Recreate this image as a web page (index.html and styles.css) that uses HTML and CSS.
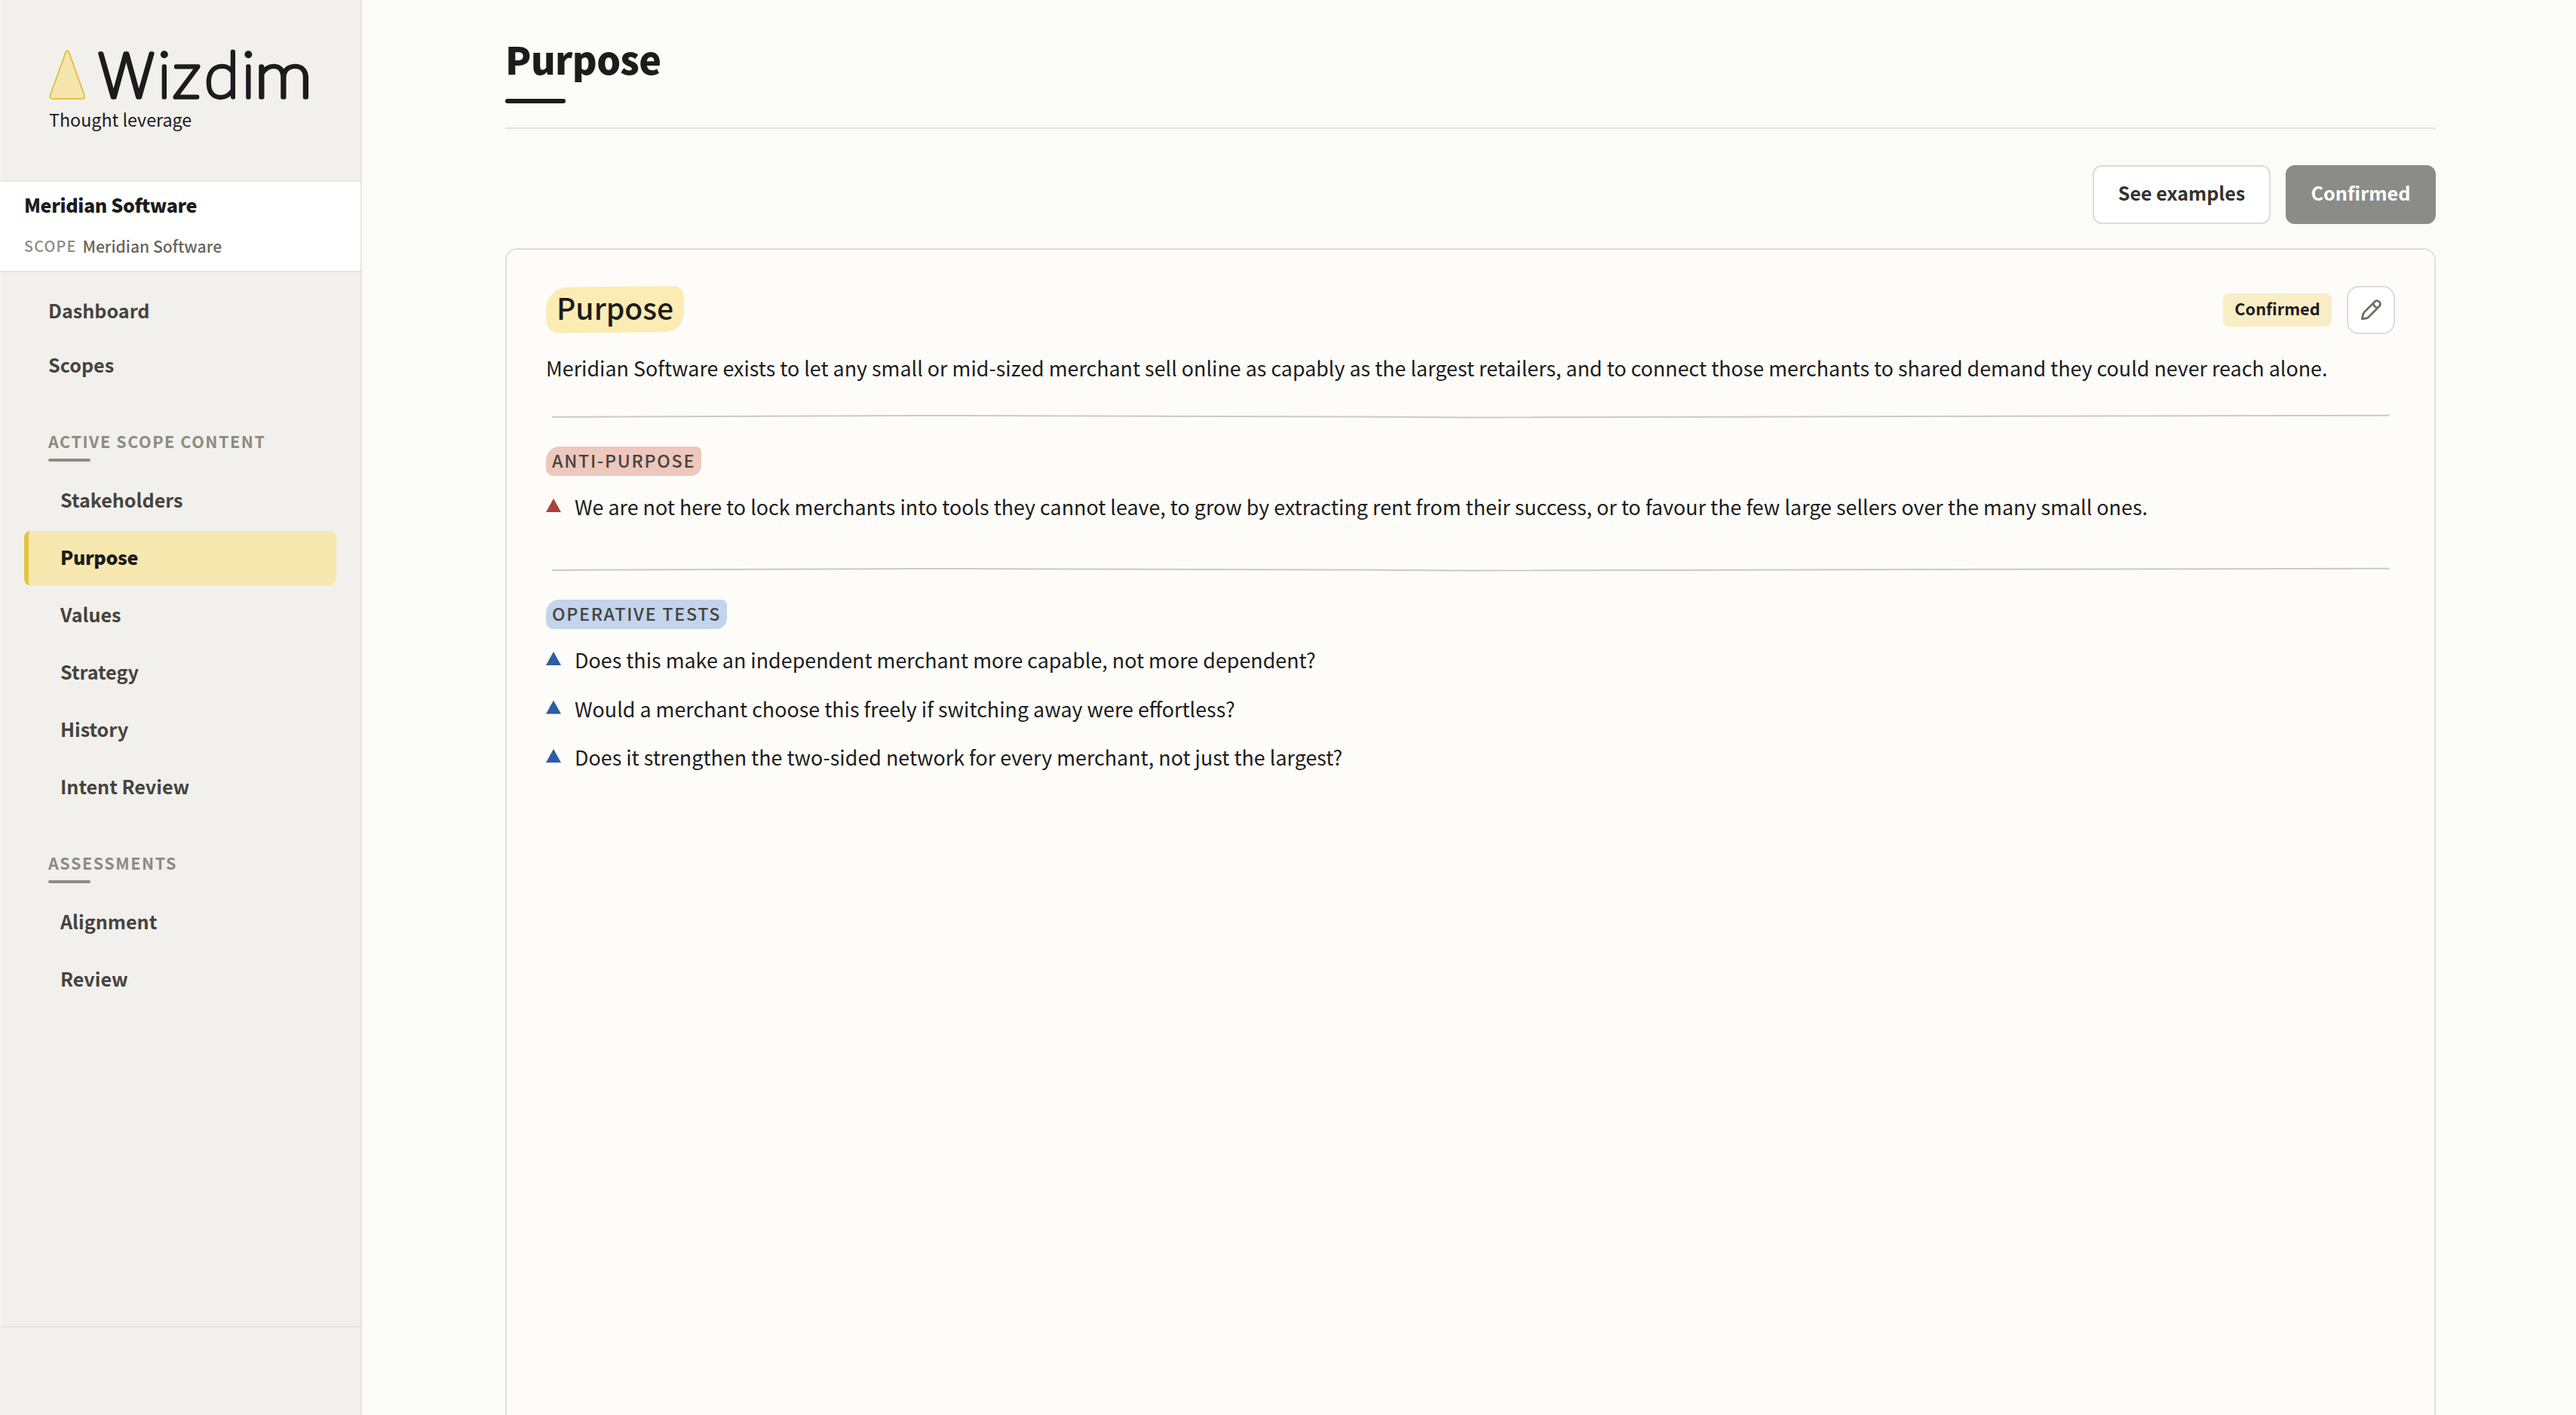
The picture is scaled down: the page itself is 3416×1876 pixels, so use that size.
FILE: index.html
```html
<!DOCTYPE html>
<html lang="en">
<head>
<meta charset="utf-8">
<title>Purpose – Wizdim</title>
<link rel="stylesheet" href="styles.css">
</head>
<body>
<div class="app">
  <aside class="sidebar">
    <header class="brand">
      <svg class="logo" viewBox="64 30 380 125" width="380" height="125" role="img" aria-label="Wizdim">
        <path d="M87.3 69 Q89.3 65.500 91.300 69 L111.700 126 Q113.500 131 108.500 131 H70 Q65 131 66.800 126 Z" fill="#f6e6ad" stroke="#e0c340" stroke-width="2"/>
        <text class="wordmark" y="129.300" x="130.200 209 229 271 320.600"><tspan class="wordmark-cap">W</tspan>izdi</text><text class="wordmark" transform="translate(337.200 129.300) scale(1.150 1)">m</text>
      </svg>
      <p class="tagline">Thought leverage</p>
    </header>
    <section class="company">
      <h2 class="company-name">Meridian Software</h2>
      <p class="company-scope"><span class="scope-label">SCOPE</span><span>Meridian Software</span></p>
    </section>
    <nav class="nav">
      <a class="link">Dashboard</a>
      <a class="link">Scopes</a>
      <h3 class="group">ACTIVE SCOPE CONTENT</h3>
      <div class="sublinks">
        <a class="link sub">Stakeholders</a>
        <a class="link sub active">Purpose</a>
        <a class="link sub">Values</a>
        <a class="link sub">Strategy</a>
        <a class="link sub">History</a>
        <a class="link sub">Intent Review</a>
      </div>
      <h3 class="group">ASSESSMENTS</h3>
      <div class="sublinks">
        <a class="link sub">Alignment</a>
        <a class="link sub">Review</a>
      </div>
    </nav>
    <footer class="sidebar-foot"></footer>
  </aside>

  <main class="main">
    <header class="page-head">
      <h1 class="title">Purpose</h1>
    </header>
    <div class="actions">
      <button class="btn">See examples</button>
      <button class="btn btn-done">Confirmed</button>
    </div>
    <article class="card">
      <div class="card-head">
        <h2 class="marker"><span>Purpose</span></h2>
        <div class="card-tools">
          <span class="badge">Confirmed</span>
          <button class="edit" aria-label="Edit">
            <svg viewBox="2 2 60 60" width="60" height="60" fill="none" stroke="#716d64" stroke-width="2.800" stroke-linejoin="round" stroke-linecap="round">
              <path d="M37.600 20.400 L23.500 34.600 Q22 36.200 21.500 38.300 L20.300 43.900 L25.800 43 Q27.600 42.600 29 41.200 L43.500 26.700 A4.400 4.400 0 0 0 37.600 20.400 Z M35 23.200 Q36 28 40.700 29"/>
            </svg>
          </button>
        </div>
      </div>
      <p class="statement">Meridian Software exists to let any small or mid-sized merchant sell online as capably as the largest retailers, and to connect those merchants to shared demand they could never reach alone.</p>
      <svg class="rule" viewBox="0 0 2452 24" width="2452" height="24"><path d="M8 12 C376 9.200 700 9.300 1076 11.600 S1776 14.500 2445 9.700"/></svg>
      <h3 class="tag tag-red">ANTI-PURPOSE</h3>
      <ul class="list list-red">
        <li>We are not here to lock merchants into tools they cannot leave, to grow by extracting rent from their success, or to favour the few large sellers over the many small ones.</li>
      </ul>
      <svg class="rule rule-gap" viewBox="0 0 2452 24" width="2452" height="24"><path d="M8 12 C376 9.200 700 9.300 1076 11.600 S1776 14.500 2445 9.700"/></svg>
      <h3 class="tag tag-blue">OPERATIVE TESTS</h3>
      <ul class="list list-blue">
        <li>Does this make an independent merchant more capable, not more dependent?</li>
        <li>Would a merchant choose this freely if switching away were effortless?</li>
        <li>Does it strengthen the two-sided network for every merchant, not just the largest?</li>
      </ul>
    </article>
  </main>
</div>
</body>
</html>
```
FILE: styles.css
```css
* { box-sizing: border-box; margin: 0; padding: 0; }

body {
  font-family: "Noto Sans CJK SC", "Noto Sans", sans-serif;
  color: #1c1c1c;
  background: #fbfbf7;
  overflow: hidden;
}

.app { display: flex; height: 1876px; overflow: hidden; }

/* Sidebar */
.sidebar {
  display: flex;
  flex-direction: column;
  flex: none;
  width: 480px;
  background: #f2f0ec;
  border-right: 2px solid #e5e4df;
}
.brand {
  height: 241px;
  padding: 30px 0 0 64px;
  border-bottom: 2px solid #e5e4df;
  box-shadow: inset 2px 0 #f4f3ef;
}
.logo { display: block; overflow: visible; }
.wordmark {
  font-family: Lato, sans-serif;
  font-weight: 100;
  font-size: 85px;
  fill: #1c1c1c;
  stroke: #1c1c1c;
  stroke-width: 5.300px;
  stroke-linejoin: round;
}
.wordmark-cap { font-family: Inter, sans-serif; font-size: 80px; }
.tagline { margin: -13px 0 0 1px; font-size: 23.280px; line-height: 32px; }

.company {
  height: 120px;
  padding: 10px 32px 0;
  background: #fff;
  border-bottom: 2px solid #e5e4df;
}
.company-name {
  font-size: 25.070px;
  font-weight: 900;
  line-height: 40px;
  letter-spacing: -0.360px;
}
.company-scope {
  display: flex;
  gap: 8px;
  margin-top: 15px;
  font-size: 21.100px;
  font-weight: 500;
  line-height: 40px;
  color: #67655d;
}
.scope-label { font-size: 19.700px; letter-spacing: 1.200px; color: #8d8b82; }

.nav { flex: 1; padding: 16px 32px 0; box-shadow: inset 2px 0 #f4f3ef; }
.link {
  display: block;
  height: 72px;
  padding-left: 32px;
  border-radius: 8px;
  font-size: 25.130px;
  font-weight: 700;
  line-height: 68px;
  color: #45443e;
}
.sublinks { display: grid; gap: 4px; margin-top: 16px; }
.sub { padding-left: 42px; border-left: 6px solid transparent; }
.active {
  background: #f7e8af;
  border-left-color: #e2c642;
  color: #1c1c1c;
  font-size: 25.070px;
  font-weight: 900;
  letter-spacing: -0.300px;
}
.group {
  margin: 47px 0 0 32px;
  font-size: 21.490px;
  font-weight: 700;
  line-height: 34px;
  letter-spacing: 1.580px;
  color: #8d8b82;
  white-space: nowrap;
}
.group::after {
  content: "";
  display: block;
  width: 56px;
  height: 4px;
  margin-top: 6px;
  border-radius: 2px;
  background: #8d8b82;
}
.sidebar-foot { height: 118px; border-top: 2px solid #e5e4df; }

/* Main column */
.main { flex: 1; padding: 41px 186px 0 190px; }
.page-head { height: 130px; border-bottom: 2px solid #e4e3de; }
.title {
  font-size: 50.150px;
  font-weight: 900;
  line-height: 72px;
  letter-spacing: -0.560px;
}
.title::after {
  content: "";
  display: block;
  width: 80px;
  height: 6px;
  margin-top: 18px;
  border-radius: 3px;
  background: #1c1c1c;
}
.actions { display: flex; justify-content: flex-end; gap: 20px; margin-top: 48px; }
.btn {
  width: 236px;
  height: 78px;
  padding-bottom: 6px;
  border: 2px solid #dbdbe0;
  border-radius: 12px;
  background: #fff;
  color: #33322e;
  font: 700 25.070px/68px "Noto Sans CJK SC", sans-serif;
}
.btn-done { width: 199px; border-color: #8b8b88; background: #8b8b88; color: #fff; font-size: 25.300px; }

.card {
  height: 1700px;
  margin-top: 32px;
  padding: 48px 52px;
  border: 2px solid #e2dfd6;
  border-radius: 16px;
  background: #fefcf9;
}
.card-head { display: flex; justify-content: space-between; height: 64px; }
.marker {
  position: relative;
  width: 183px;
  height: 63px;
  padding: 0 14px;
  font-size: 39.150px;
  font-weight: 500;
  line-height: 56px;
}
.marker::before {
  content: "";
  position: absolute;
  inset: 1px 0 1px;
  border-radius: 30px 14px 26px 18px / 30px 14px 26px 18px;
  background: #fcecb3;
  transform: rotate(-0.600deg);
}
.marker span { position: relative; }
.card-tools { display: flex; align-items: center; gap: 20px; }
.badge {
  width: 144px;
  height: 44px;
  border-radius: 8px;
  background: #f8edc4;
  font-size: 21.700px;
  font-weight: 700;
  line-height: 39px;
  text-align: center;
}
.edit {
  width: 64px;
  height: 64px;
  border: 2px solid #dbdbe0;
  border-radius: 16px;
  background: #fff;
}
.edit svg { display: block; }
.statement { margin-top: 22px; font-size: 26.850px; line-height: 46px; white-space: nowrap; }
.rule { display: block; margin-top: 30px; fill: none; stroke: #cfc9c0; stroke-width: 2; }
.rule-gap { margin-top: 49px; }
.tag {
  width: fit-content;
  height: 39px;
  margin-top: 27px;
  padding: 0 8px;
  border-radius: 18px 7px 14px 10px;
  font-size: 23.280px;
  font-weight: 500;
  line-height: 36px;
  letter-spacing: 1.730px;
  color: #45443e;
}
.tag-red { background: #eec7bd; }
.tag-blue { background: #c3d4ed; }
.list { display: grid; gap: 18.500px; margin-top: 18px; list-style: none; }
.list li { display: flex; gap: 18px; font-size: 26.860px; line-height: 46px; white-space: nowrap; }
.list li::before {
  content: "";
  width: 20px;
  height: 18px;
  margin-top: 12px;
  clip-path: polygon(50% 0, 100% 100%, 0 100%);
}
.list-red li::before { background: #a8443c; }
.list-blue li::before { background: #2c5ea3; }
```
